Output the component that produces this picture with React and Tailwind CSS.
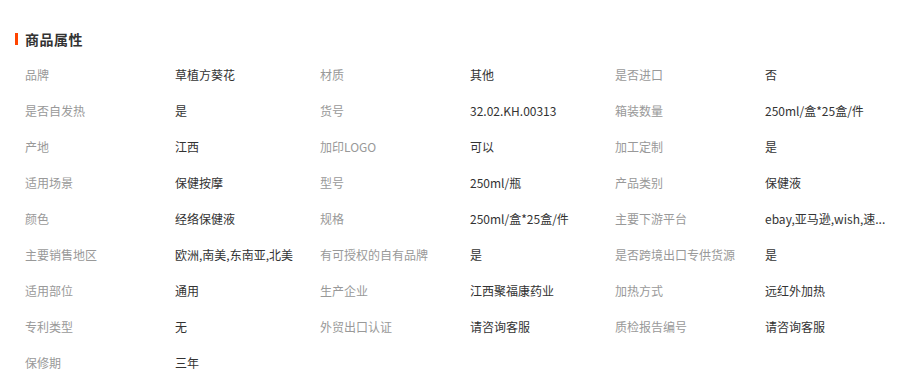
import React from 'react'

const rows = [
  [['品牌', '草植方葵花'], ['材质', '其他'], ['是否进口', '否']],
  [['是否自发热', '是'], ['货号', '32.02.KH.00313'], ['箱装数量', '250ml/盒*25盒/件']],
  [['产地', '江西'], ['加印LOGO', '可以'], ['加工定制', '是']],
  [['适用场景', '保健按摩'], ['型号', '250ml/瓶'], ['产品类别', '保健液']],
  [['颜色', '经络保健液'], ['规格', '250ml/盒*25盒/件'], ['主要下游平台', 'ebay,亚马逊,wish,速...']],
  [['主要销售地区', '欧洲,南美,东南亚,北美'], ['有可授权的自有品牌', '是'], ['是否跨境出口专供货源', '是']],
  [['适用部位', '通用'], ['生产企业', '江西聚福康药业'], ['加热方式', '远红外加热']],
  [['专利类型', '无'], ['外贸出口认证', '请咨询客服'], ['质检报告编号', '请咨询客服']],
  [['保修期', '三年']],
]

export default function App() {
  return (
    <div className="w-[905px] h-[387px] bg-white font-['Noto_Sans_CJK_SC','Microsoft_YaHei',sans-serif] pt-[31px] pl-[15px]">
      <div className="flex items-center h-[16px]">
        <span className="w-[3px] h-[12px] bg-[#ff4400]" />
        <h3 className="ml-[7px] text-[14px] font-bold text-[#333] leading-[16px] tracking-[0.5px]">商品属性</h3>
      </div>
      <div className="mt-[10px] pl-[10px]">
        {rows.map((row, i) => (
          <div key={i} className="flex h-[36px] items-center text-[12px]">
            {row.map(([label, value]) => (
              <div key={label} className="flex w-[295px] shrink-0">
                <span className="w-[150px] text-[#999] whitespace-nowrap">{label}</span>
                <span className="w-[125px] text-[#333] whitespace-nowrap">{value}</span>
              </div>
            ))}
          </div>
        ))}
      </div>
    </div>
  )
}
